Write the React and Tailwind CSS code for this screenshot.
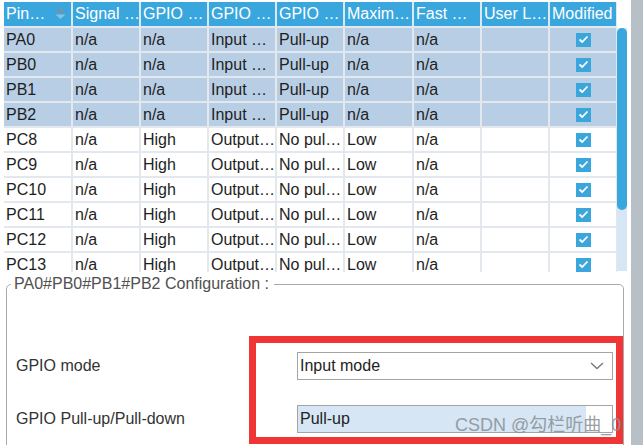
import React from 'react'

const cols = [67, 66, 66, 66, 66, 67, 66, 66, 66]
const headers = ['Pin…', 'Signal …', 'GPIO …', 'GPIO …', 'GPIO …', 'Maxim…', 'Fast …', 'User L…', 'Modified']

const inputRow = ['n/a', 'n/a', 'Input …', 'Pull-up', 'n/a', 'n/a', '', 'x']
const outputRow = ['n/a', 'High', 'Output…', 'No pul…', 'Low', 'n/a', '', 'x']

const rows = [
  { pin: 'PA0', sel: true, vals: inputRow },
  { pin: 'PB0', sel: true, vals: inputRow },
  { pin: 'PB1', sel: true, vals: inputRow },
  { pin: 'PB2', sel: true, vals: inputRow },
  { pin: 'PC8', sel: false, vals: outputRow },
  { pin: 'PC9', sel: false, vals: outputRow },
  { pin: 'PC10', sel: false, vals: outputRow },
  { pin: 'PC11', sel: false, vals: outputRow },
  { pin: 'PC12', sel: false, vals: outputRow },
  { pin: 'PC13', sel: false, vals: outputRow },
]

const Check = () => (
  <div className="w-[15px] h-[14px] bg-[#3aa6dc] flex items-center justify-center">
    <svg width="11" height="9" viewBox="0 0 11 9">
      <polyline points="1.5,4.5 4.2,7 9.5,1.5" fill="none" stroke="white" strokeWidth="1.8" />
    </svg>
  </div>
)

const SortIcon = () => (
  <svg width="11" height="13" viewBox="0 0 11 13" className="absolute right-[5px] top-[5px]">
    <polygon points="5.5,1 10.5,5.5 0.5,5.5" fill="#7892a3" />
    <polygon points="5.5,12 10.5,7.5 0.5,7.5" fill="#86c2e4" />
  </svg>
)

export default function App() {
  return (
    <div className="relative w-[643px] h-[445px] flex bg-white overflow-hidden font-['Liberation_Sans',Arial,sans-serif] text-[16px] text-[#1e1e1e]">
      <div className="w-[631px] flex flex-col">
        {/* table */}
        <div className="h-[272px] flex overflow-hidden shrink-0">
          <div className="pl-[4px] pt-[2px] w-[617px]">
            <div className="flex flex-col gap-[2px] bg-[#e2e8ee]">
              <div className="flex gap-[2px] bg-[#dde9f2]">
                {headers.map((h, i) => (
                  <div
                    key={i}
                    style={{ width: cols[i] }}
                    className="relative h-[24px] bg-[#39a7dd] text-white flex items-center px-[2px] whitespace-nowrap overflow-hidden"
                  >
                    <span>{h}</span>
                    {i === 0 && <SortIcon />}
                  </div>
                ))}
              </div>
              {rows.map((r) => (
                <div key={r.pin} className="flex gap-[2px]">
                  {[r.pin, ...r.vals].map((v, i) => (
                    <div
                      key={i}
                      style={{ width: cols[i] }}
                      className={`h-[23px] flex items-center px-[2px] whitespace-nowrap overflow-hidden ${
                        r.sel ? 'bg-[#b8cee5]' : 'bg-white'
                      } ${i === 8 ? 'justify-center' : ''}`}
                    >
                      {i === 8 ? <Check /> : v}
                    </div>
                  ))}
                </div>
              ))}
            </div>
          </div>
          {/* scrollbar */}
          <div className="w-[10px] mt-[28px] bg-[#d6e6f4] h-[243px]">
            <div className="h-[182px] bg-[#39a7dd] rounded-[5px]" />
          </div>
        </div>

        {/* configuration panel */}
        <div className="flex-1 pl-[6px] pr-[7px]">
          <fieldset className="mt-[3px] h-[200px] border border-[#a9a9a9] rounded-[5px]">
            <legend className="ml-[4px] pl-[3px] pr-[5px] text-[#505050] leading-[18px]">
              PA0#PB0#PB1#PB2 Configuration :
            </legend>
            <div className="pt-[59px] pl-[9px] pr-[10px] flex flex-col gap-[25px] text-[#333]">
              <div className="flex items-center">
                <span>GPIO mode</span>
                <div className="ml-auto w-[316px] h-[28px] border border-[#a4a4a4] bg-white flex items-center pl-[2px] pr-[8px] text-[#222]">
                  <span>Input mode</span>
                  <svg width="14" height="8" viewBox="0 0 14 8" className="ml-auto">
                    <polyline points="1,1 7,6.5 13,1" fill="none" stroke="#777" strokeWidth="1.3" />
                  </svg>
                </div>
              </div>
              <div className="flex items-center">
                <span>GPIO Pull-up/Pull-down</span>
                <div className="ml-auto w-[316px] h-[28px] border border-[#a4a4a4] flex text-[#222]">
                  <div className="flex-1 bg-[#d6e6f4] flex items-center pl-[2px]">Pull-up</div>
                  <div className="w-[26px] bg-white" />
                </div>
              </div>
            </div>
          </fieldset>
        </div>
      </div>
      <div className="w-[12px] bg-[#b7c0c6]" />

      {/* red annotation box */}
      <div className="absolute left-[249px] top-[336px] w-[374px] h-[108px] border-[7px] border-[#ef3535]" />
      {/* watermark */}
      <div className="absolute left-[455px] top-[413px] text-[18px] leading-[24px] text-[#8f959b] opacity-90 whitespace-nowrap font-['Liberation_Sans','Noto_Sans_CJK_SC',sans-serif]">
        CSDN @勾栏听曲_0
      </div>
    </div>
  )
}
